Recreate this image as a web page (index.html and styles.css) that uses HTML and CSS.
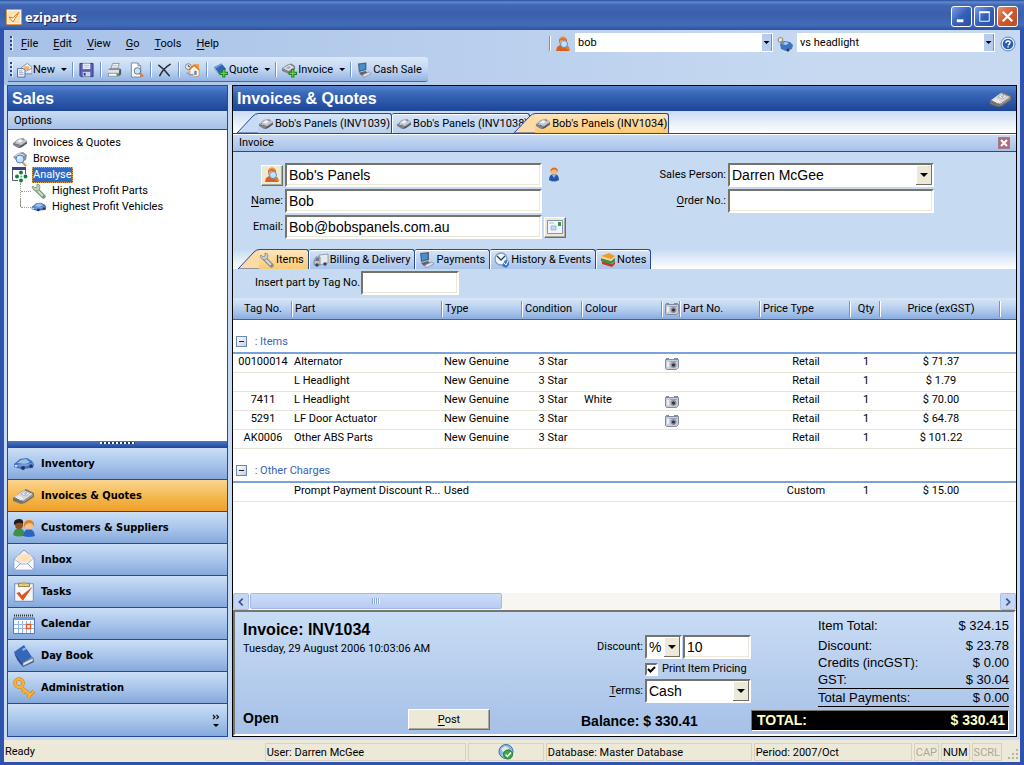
FILE: index.html
```html
<!DOCTYPE html>
<html lang="en">
  <head>
    <meta charset="utf-8">
    <title>eziparts</title>
    <meta name="viewport" content="width=device-width, initial-scale=1">
    <link rel="stylesheet" href="styles.css">
  </head>
  <body>
    <!-- icon sheet -->
    <svg class="sprites" aria-hidden="true">
      <symbol id="i-logo" viewBox="0 0 16 16">
        <rect x=".5" y=".5" width="15" height="15" rx="1" fill="#fff3dc" stroke="#e8963c"/>
        <path d="M2 2h12v12H2z" fill="#fbe3b8"/>
        <path d="M3 8l4 5 6-10-6 6z" fill="#fff" stroke="#e07b1c"/>
      </symbol>
      <symbol id="i-part" viewBox="0 0 16 16">
        <path d="M1 8l5-4 5-1 4 3v2l-5 4-4 1-5-3z" fill="#83858b"/>
        <path d="M1 8l6-4 4-.5 4 2.500-6 4z" fill="#c6c8ce"/>
        <path d="M5 6.500l3-2 3 1-3 2z" fill="#f3f4f7"/>
        <path d="M7 12l8-5v1.500L10 12l-3 1z" fill="#55575e"/>
        <path d="M2 8.500l3 2M5 9l2 1M10 4l2 1M4 7l-2 2" stroke="#707380" stroke-width=".9"/>
      </symbol>
      <symbol id="i-bigpart" viewBox="0 0 22 16">
        <path d="M0 10l9-7 4-2 8 4v4l-9 6-4 1-8-3z" fill="#77746f"/>
        <path d="M1 9l10-7 9 4-10 7z" fill="#d8d9da"/>
        <path d="M8 6l4-3 5 2-4 3z" fill="#fafafa" stroke="#9c9c9e" stroke-width=".7"/>
        <path d="M11 5.500l3-1M12 6.500l2-1" stroke="#7b86b5" stroke-width=".8"/>
        <path d="M3 9l5 3M5 8l5 3" stroke="#fff"/>
        <path d="M10 13l10-7v2l-9 6z" fill="#9a938a"/>
      </symbol>
      <symbol id="i-browse" viewBox="0 0 16 16">
        <path d="M1 6l5-4 5-1 4 3-1 5-7 3z" fill="#8c93a1"/>
        <path d="M2 5l5-3 6 2-5 3z" fill="#d5dae3"/>
        <path d="M10 11l4 4" stroke="#e39a52" stroke-width="2.4"/>
        <circle cx="8" cy="8" r="4" fill="#bfe3fa" stroke="#5b7fb5"/>
        <path d="M6 8q0-2 2-2" stroke="#fff" fill="none"/>
      </symbol>
      <symbol id="i-analyse" viewBox="0 0 16 16">
        <path d="M.5.5h13v13H.5z" fill="#fff" stroke="#55607e"/>
        <path d="M0 0h14v3H0z" fill="#2f4788"/>
        <path d="M6 7h8v8H6z" fill="#fff"/>
        <g fill="#0f7f33"><circle cx="9" cy="5.500" r="1.900"/><circle cx="5" cy="9.500" r="1.900"/><circle cx="13.500" cy="9.500" r="1.900"/><circle cx="9" cy="13.500" r="1.900"/></g>
        <circle cx="9.300" cy="9.500" r="1" fill="#57b074"/>
      </symbol>
      <symbol id="i-wrench" viewBox="0 0 16 16">
        <path d="M5.500 6.500l7 7" stroke="#7e8288" stroke-width="4.400" stroke-linecap="round"/>
        <path d="M5 6l7.500 7.500" stroke="#d6d8dc" stroke-width="2.400" stroke-linecap="round"/>
        <path d="M2 3l2 2 2-1V1q3 0 3 3t-3 4Q2 8 1 4z" fill="#c9ccd1" stroke="#85898f" stroke-width=".8"/>
        <circle cx="12.500" cy="13.500" r="1" fill="#6b6f76"/>
      </symbol>
      <symbol id="i-greenwrench" viewBox="0 0 16 16">
        <path d="M5.500 6.500l7 7" stroke="#6a9a62" stroke-width="4.400" stroke-linecap="round"/>
        <path d="M5 6l7.500 7.500" stroke="#cfd4cf" stroke-width="2.400" stroke-linecap="round"/>
        <path d="M2 3l2 2 2-1V1q3 0 3 3t-3 4Q2 8 1 4z" fill="#c9ccc9" stroke="#6a9a62" stroke-width=".8"/>
        <circle cx="12.500" cy="13.500" r="1" fill="#6b6f76"/>
      </symbol>
      <symbol id="i-car" viewBox="0 0 22 14">
        <path d="M1 7l6-5 7-1 5 3 2 3-1 4-12 1-7-2z" fill="#3d70bd"/>
        <path d="M4 6l4-3 5-1 4 3-5 2z" fill="#9cc0ea"/>
        <path d="M1 8l8-1 11-1v2l-11 2-8-1z" fill="#6c9bdb"/>
        <circle cx="10" cy="11" r="2" fill="#2b3550"/><circle cx="18" cy="9" r="1.800" fill="#2b3550"/>
        <circle cx="3" cy="9" r="1" fill="#e8f2fc"/>
      </symbol>
      <symbol id="i-new" viewBox="0 0 16 16">
        <path d="M5 5l6-4 5 4v7H5z" fill="#f2f4fa" stroke="#7286ad" stroke-width=".9"/>
        <path d="M7 4h6v4H7z" fill="#f6b26a"/><path d="M5 6l5 3 6-3v6H5z" fill="#e5eaf5" stroke="#7286ad" stroke-width=".8"/>
        <path d="M.5 6.500h6l2 2v7h-8z" fill="#fff" stroke="#4d67a2"/>
        <path d="M2 9h4M2 11h5M2 13h5" stroke="#7c96c9"/>
      </symbol>
      <symbol id="i-save" viewBox="0 0 16 16">
        <path d="M1 1h14v14H2l-1-1z" fill="#5a63b4" stroke="#2f3a86"/>
        <path d="M4 1h8v6H4z" fill="#eef3fb"/><path d="M4 10h8v5H4z" fill="#ccd4e6"/><path d="M5 11h2v3H5z" fill="#2c3f80"/>
        <path d="M5 3h6M5 5h6" stroke="#a9bce0"/>
      </symbol>
      <symbol id="i-print" viewBox="0 0 16 16">
        <path d="M6 1h7l-2 6H4z" fill="#fff" stroke="#6f7b93" stroke-width=".8"/>
        <path d="M6 3h5M5.500 5h5" stroke="#95a4c2" stroke-width=".8"/>
        <path d="M1 8l2-2h11l1 2v5l-2 2H1z" fill="#858d9b"/>
        <path d="M1 8h12v3H1z" fill="#dde1e8"/><path d="M2 12h10l-1 2H2z" fill="#fff"/><path d="M10 12h3v2h-3z" fill="#3a9b55"/>
        <path d="M13 8l2-1v5l-2 2z" fill="#4f5665"/>
      </symbol>
      <symbol id="i-preview" viewBox="0 0 16 16">
        <path d="M2.500.5h7l3 3v12h-10z" fill="#fff" stroke="#7383a6"/><path d="M9.500.5v3h3" fill="#dde6f5" stroke="#7383a6"/>
        <path d="M11 11l4 4" stroke="#de7d28" stroke-width="2.400"/>
        <circle cx="9" cy="9" r="3.500" fill="#c6e7fa" stroke="#5c7096"/>
      </symbol>
      <symbol id="i-cross" viewBox="0 0 16 16">
        <path d="M2 3q6 4 11 11M14 2Q7 6 3 14" stroke="#2d2d35" stroke-width="1.700" fill="none" stroke-linecap="round"/>
      </symbol>
      <symbol id="i-home" viewBox="0 0 18 16">
        <circle cx="4" cy="4" r="3.500" fill="#eef2f8" stroke="#6b7486"/><path d="M4 2v2h2" stroke="#333" fill="none"/>
        <path d="M12 1h5v6h-5z" fill="#f09c42"/>
        <path d="M6 8l5-5 6 5v7l-5 1-6-3z" fill="#fdf3df" stroke="#b37b3c" stroke-width=".7"/>
        <path d="M4 8l7-6 6 6" fill="none" stroke="#e57e1f" stroke-width="1.700"/>
        <path d="M11 9h3v5h-3z" fill="#6f89bb"/><path d="M2 11l4 3 4-1" stroke="#8f9bb3" fill="none" stroke-width="1.500"/>
      </symbol>
      <symbol id="i-quote" viewBox="0 0 16 16">
        <path d="M1 5l8-4 5 6-7 6z" fill="#2f66b3"/><path d="M1 5l8-4 1 1-8 5z" fill="#6aa0e0"/>
        <path d="M2 7l5 7 3-2" fill="none" stroke="#9db2d4" stroke-width="1.400"/>
        <path d="M11.500 7v9M7 11.500h9" stroke="#1e7d25" stroke-width="3.400"/><path d="M11.500 8v7M8 11.500h7" stroke="#6bd04f" stroke-width="1.400"/>
      </symbol>
      <symbol id="i-invoice" viewBox="0 0 16 16">
        <path d="M0 6l6-4 4-1 4 3v3l-7 5-7-3z" fill="#7e8188"/><path d="M1 6l7-4 5 3-6 4z" fill="#dddfe4"/><path d="M4 6l3-2 3 1-3 2z" fill="#a4a8b0"/>
        <path d="M11.500 7v9M7 11.500h9" stroke="#1e7d25" stroke-width="3.400"/><path d="M11.500 8v7M8 11.500h7" stroke="#6bd04f" stroke-width="1.400"/>
      </symbol>
      <symbol id="i-cash" viewBox="0 0 16 16">
        <path d="M1 1l9-1v8l-8 2z" fill="#59616f"/><path d="M2.500 2l6-.5v5.500l-5.500 1.500z" fill="#3f92d6"/>
        <path d="M2 11l7-2 2 2-6 3z" fill="#5b6373"/><path d="M6 13l7-3 2 2-8 4z" fill="#dfe2e8" stroke="#7c8390" stroke-width=".7"/>
      </symbol>
      <symbol id="i-find" viewBox="0 0 16 16">
        <path d="M4 5q0-4 4-4t4 4l-1 4 3 2v4H1l1-4 3-2z" fill="#d9611e"/><path d="M5 5q3-3 6 0v3H5z" fill="#f6bd83"/>
        <path d="M5 3q3-4 6 0" fill="none" stroke="#f29a3a" stroke-width="1.500"/>
        <path d="M11 11l4 3" stroke="#e48a22" stroke-width="2"/><circle cx="9" cy="8" r="3.500" fill="#bfe4fa" stroke="#6b8ebc"/>
      </symbol>
      <symbol id="i-findcar" viewBox="0 0 16 16">
        <path d="M3 8l4-3 6 1 3 3-1 4-6 2-5-2z" fill="#3e73bf"/><path d="M5 8l3-2 4 1-3 2z" fill="#acd0f4"/>
        <circle cx="3.500" cy="4" r="2.500" fill="#e6e3dc" stroke="#8a8678"/><path d="M4 5l2 3" stroke="#8a8d94" stroke-width="2"/>
        <circle cx="11" cy="14" r="1.500" fill="#303748"/>
      </symbol>
      <symbol id="i-help" viewBox="0 0 16 16">
        <circle cx="8" cy="8" r="7" fill="#e8f1fc" stroke="#5e88c4"/><circle cx="8" cy="8" r="5.300" fill="#2d5fb0"/>
        <path d="M6 7q0-2 2-2t2 1.500T8 9" fill="none" stroke="#fff" stroke-width="1.400"/><path d="M7.300 10.200h1.500v1.400H7.300z" fill="#fff"/>
      </symbol>
      <symbol id="i-person" viewBox="0 0 16 16">
        <path d="M3 13q0-6 5-6t5 6q-5 3-10 0z" fill="#2457a8"/><path d="M6 8l2 3 2-3z" fill="#8fb4ea"/>
        <circle cx="8" cy="4.500" r="3.300" fill="#f5b77c"/><path d="M4.500 5q-.5-4.500 4-4.500 4 .5 3 5-1-3-3.500-3T4.500 5z" fill="#df6f1c"/>
      </symbol>
      <symbol id="i-card" viewBox="0 0 16 14">
        <path d="M.5.5h15v13H.5z" fill="#f2f5fb" stroke="#8492b0"/><path d="M11 2h3v4h-3z" fill="#2f9c4d"/><path d="M2 3h5M4 6h5v4H4z" fill="#cbd5ea" stroke="#9aa9cb" stroke-width=".8"/>
      </symbol>
      <symbol id="i-truck" viewBox="0 0 16 16">
        <path d="M6 3l9-1v9l-9 2z" fill="#e6e9ee" stroke="#8a909b" stroke-width=".8"/><path d="M1 9l2-4h4v8H1z" fill="#bcc3cf" stroke="#747b88" stroke-width=".8"/>
        <path d="M2 9l1.500-3H6v3z" fill="#6d7890"/><circle cx="4" cy="13" r="1.700" fill="#3b4150"/><circle cx="12" cy="12" r="1.700" fill="#3b4150"/>
      </symbol>
      <symbol id="i-clock" viewBox="0 0 16 16">
        <circle cx="7" cy="7" r="6" fill="#f4f8fd" stroke="#7c9cc9" stroke-width="1.300"/><path d="M3 4l4 4 4-4" fill="none" stroke="#2b3c66" stroke-width="1.300"/>
        <path d="M8 14l3-6 4 1v4l-3 3z" fill="#3b78c6"/><path d="M10 11l2 2 2-4" stroke="#fff" fill="none"/>
      </symbol>
      <symbol id="i-books" viewBox="0 0 16 16">
        <path d="M2 9l10 3 3-3v3l-3 3-10-3z" fill="#c23a22"/><path d="M1 6l10 3 4-3v3l-4 3-10-3z" fill="#2f9650"/>
        <path d="M1 4l8-3 6 3-4 4-10-3z" fill="#f49a28"/><path d="M1 4v2l10 3 4-4V4l-4 3z" fill="#fbd58f"/>
      </symbol>
      <symbol id="i-camera" viewBox="0 0 14 13">
        <path d="M.5 2.500h13v8l-2 2h-10l-1-1z" fill="#c9cdd8" stroke="#868c9c"/><path d="M1 1h3v2H1zM9 1h4v2H9z" fill="#7f8cab"/>
        <path d="M5 4h7v1H5z" fill="#9aa1b3"/>
        <circle cx="8.500" cy="8" r="3" fill="#8d92a0"/><circle cx="8.500" cy="8" r="1.600" fill="#2e3139"/><path d="M2 5h2v5H2z" fill="#eceef2"/>
      </symbol>
      <symbol id="i-people" viewBox="0 0 22 18">
        <path d="M0 16q1-7 6-7t6 7q-6 3-12 0z" fill="#3d9142"/><circle cx="6" cy="6" r="4" fill="#8c4f22"/><path d="M1 6q-1-6 5-6 5 0 4 5Q6 2 1 6z" fill="#1d1b1b"/>
        <path d="M10 17q1-7 6-7t6 7q-6 2-12 0z" fill="#2a64c1"/><circle cx="16" cy="6.500" r="4" fill="#f6c08a"/><path d="M11 9q-1-8 5-8 6 0 5 7-1-4-5-4-4 1-5 5z" fill="#e4801f"/>
      </symbol>
      <symbol id="i-inbox" viewBox="0 0 22 22">
        <path d="M1 10L11 1l10 8v12H1z" fill="#eef1f9" stroke="#8c9bc4"/><path d="M4 7q7-4 14-1v7H4z" fill="#fde2bd"/>
        <path d="M1 10l7 5h6l7-6v12H1z" fill="#f7f9fd" stroke="#9aa8cb" stroke-width=".8"/><path d="M1 21l7-7M21 21l-7-7" stroke="#8c9bc4"/>
      </symbol>
      <symbol id="i-tasks" viewBox="0 0 20 20">
        <path d="M1.500 2.500h17v16h-17z" fill="#f5f8fe" stroke="#7a92c6"/><path d="M5 2h10v3H5z" fill="#e6cf93" stroke="#9e8646"/><circle cx="10" cy="2" r="1.500" fill="#c9ac60"/>
        <path d="M3 11l3-1 2 3L18 5 9 18z" fill="#e2541e"/>
      </symbol>
      <symbol id="i-calendar" viewBox="0 0 22 20">
        <path d="M.5 4h21v15.500H.5z" fill="#f8fbff" stroke="#5878b9"/><path d="M1 3h20v3H1z" fill="#6d9ae0"/><path d="M1 1.500h20" stroke="#333" stroke-dasharray="1 1" stroke-width="2"/>
        <path d="M5.500 7v12M9.500 7v12M13.500 7v12M17.500 7v12M1 10.500h20M1 14.500h20" stroke="#9ab4e2"/><path d="M13.500 10.500h4v4h-4z" fill="#fff" stroke="#e25c20" stroke-width="1.400"/>
      </symbol>
      <symbol id="i-book" viewBox="0 0 20 22">
        <path d="M0 7L10 0l8 12-9 6z" fill="#3567b7"/><path d="M0 7l9 11 10-6 1 5-11 5Q2 15 0 7z" fill="#2a4f94"/><path d="M9 18l10-5v3L9 21z" fill="#e8e8ea" stroke="#80848e" stroke-width=".7"/>
        <path d="M8 4l4-2 1 2-4 2z" fill="#8ab4ec"/>
      </symbol>
      <symbol id="i-key" viewBox="0 0 22 22">
        <path d="M7 9l10 9M12 13l-2 3M17 18l-2 3M17 18l4-4" stroke="#c47d14" stroke-width="3.600"/><circle cx="6" cy="6" r="4" fill="none" stroke="#c47d14" stroke-width="3.600"/>
        <path d="M7 9l10 9M12 13l-2 3M17 18l-2 3M17 18l4-4" stroke="#f9b03a" stroke-width="2.400"/><circle cx="6" cy="6" r="4" fill="none" stroke="#f9b03a" stroke-width="2.600"/>
      </symbol>
      <symbol id="i-globe" viewBox="0 0 16 16">
        <circle cx="8" cy="7.500" r="7" fill="#8db7e6" stroke="#3f6cae"/><path d="M3 5l4-3 4 2-2 3-4 1zM4 11l3-2 2 3-2 2z" fill="#dcebdc"/>
        <circle cx="10" cy="10.500" r="4.500" fill="#3faa43" stroke="#257a2b"/><path d="M7.500 10.500l2 2 3.500-4" stroke="#fff" stroke-width="1.500" fill="none"/>
      </symbol>
    </svg>

    <div class="window">
      <header class="titlebar">
        <svg class="ico"><use href="#i-logo"/></svg>
        <h1>eziparts</h1>
        <button class="win-btn" aria-label="Minimize"><svg viewBox="0 0 20 20"><path d="M5 13h7v3H5z" fill="#fff"/></svg></button>
        <button class="win-btn" aria-label="Maximize"><svg viewBox="0 0 20 20"><path d="M5 5.500h10V15H5z" fill="none" stroke="#fff"/><path d="M4.500 4.500h11v2h-11z" fill="#fff"/></svg></button>
        <button class="win-btn win-close" aria-label="Close"><svg viewBox="0 0 20 20"><path d="M5 5l10 10M15 5L5 15" stroke="#fff" stroke-width="2.400"/></svg></button>
      </header>

      <div class="bars">
        <div class="menubar">
          <span class="grip"></span>
          <nav class="menu">
            <button><u>F</u>ile</button>
            <button><u>E</u>dit</button>
            <button><u>V</u>iew</button>
            <button><u>G</u>o</button>
            <button><u>T</u>ools</button>
            <button><u>H</u>elp</button>
          </nav>
          <div class="search">
            <span class="sep"></span>
            <svg class="ico"><use href="#i-find"/></svg>
            <div class="combo"><input type="text" value="bob" aria-label="Find customer"><button aria-label="Recent customers"><i class="arrow"></i></button></div>
            <svg class="ico"><use href="#i-findcar"/></svg>
            <div class="combo"><input type="text" value="vs headlight" aria-label="Find part"><button aria-label="Recent parts"><i class="arrow"></i></button></div>
            <button class="help" aria-label="Help"><svg class="ico"><use href="#i-help"/></svg></button>
          </div>
        </div>
        <div class="toolbar">
          <span class="grip"></span>
          <button class="first"><svg class="ico"><use href="#i-new"/></svg>New<i class="arrow"></i></button>
          <span class="sep"></span>
          <button aria-label="Save"><svg class="ico"><use href="#i-save"/></svg></button>
          <span class="sep"></span>
          <button aria-label="Print"><svg class="ico"><use href="#i-print"/></svg></button>
          <button class="next" aria-label="Preview"><svg class="ico"><use href="#i-preview"/></svg></button>
          <span class="sep"></span>
          <button aria-label="Delete"><svg class="ico"><use href="#i-cross"/></svg></button>
          <span class="sep"></span>
          <button aria-label="Home"><svg class="ico"><use href="#i-home"/></svg></button>
          <span class="sep"></span>
          <button><svg class="ico"><use href="#i-quote"/></svg>Quote<i class="arrow"></i></button>
          <span class="sep"></span>
          <button><svg class="ico"><use href="#i-invoice"/></svg>Invoice<i class="arrow"></i></button>
          <span class="sep"></span>
          <button><svg class="ico"><use href="#i-cash"/></svg>Cash Sale</button>
        </div>
      </div>

      <div class="content">
        <aside class="side">
          <h2 class="band">Sales</h2>
          <h3 class="subband">Options</h3>
          <ul class="tree">
            <li><a href="#"><svg class="ico"><use href="#i-part"/></svg><span>Invoices &amp; Quotes</span></a></li>
            <li><a href="#"><svg class="ico"><use href="#i-browse"/></svg><span>Browse</span></a></li>
            <li><a href="#" class="selected"><svg class="ico"><use href="#i-analyse"/></svg><span>Analyse</span></a>
              <ul>
                <li><a href="#"><svg class="ico"><use href="#i-greenwrench"/></svg><span>Highest Profit Parts</span></a></li>
                <li><a href="#"><svg class="ico"><use href="#i-car"/></svg><span>Highest Profit Vehicles</span></a></li>
              </ul>
            </li>
          </ul>
          <div class="splitter"><i></i></div>
          <nav class="nav">
            <a href="#"><svg><use href="#i-car"/></svg>Inventory</a>
            <a href="#" class="current"><svg><use href="#i-bigpart"/></svg>Invoices &amp; Quotes</a>
            <a href="#"><svg><use href="#i-people"/></svg>Customers &amp; Suppliers</a>
            <a href="#"><svg><use href="#i-inbox"/></svg>Inbox</a>
            <a href="#"><svg><use href="#i-tasks"/></svg>Tasks</a>
            <a href="#"><svg><use href="#i-calendar"/></svg>Calendar</a>
            <a href="#"><svg><use href="#i-book"/></svg>Day Book</a>
            <a href="#"><svg><use href="#i-key"/></svg>Administration</a>
            <div class="more"><button aria-label="Configure buttons"><svg viewBox="0 0 8 14"><path d="M1 1l2 2-2 2M4.500 1l2 2-2 2" fill="none" stroke="#111" stroke-width="1.200"/><path d="M1 10h6l-3 3z"/></svg></button></div>
          </nav>
        </aside>

        <main class="main">
          <h2 class="band">Invoices &amp; Quotes <svg class="band-ico"><use href="#i-bigpart"/></svg></h2>
          <div class="tabs doc-tabs">
            <button class="tab slanted">
              <svg class="slant" viewBox="0 0 22 20"><path d="M0 20L16 3Q18 .5 22 .5V20z"/></svg>
              <span class="face"><svg class="ico"><use href="#i-part"/></svg>Bob's Panels (INV1039)</span>
            </button>
            <button class="tab">
              <span class="face"><svg class="ico"><use href="#i-part"/></svg>Bob's Panels (INV1038)</span>
            </button>
            <button class="tab slanted active">
              <svg class="slant" viewBox="0 0 22 20"><path d="M0 20L16 3Q18 .5 22 .5V20z"/></svg>
              <span class="face"><svg class="ico"><use href="#i-part"/></svg>Bob's Panels (INV1034)</span>
            </button>
          </div>
          <div class="subband doc-bar">Invoice <button aria-label="Close invoice"><svg viewBox="0 0 10 10"><path d="M2 2l6 6M8 2L2 8" stroke="#fff" stroke-width="2"/></svg></button></div>

          <form class="details">
            <div class="fields contact">
              <button type="button" class="bevel pick" aria-label="Find customer"><svg class="ico"><use href="#i-find"/></svg></button>
              <input type="text" value="Bob's Panels" aria-label="Customer">
              <svg class="ico"><use href="#i-person"/></svg>
              <label for="name"><u>N</u>ame:</label>
              <input type="text" id="name" value="Bob">
              <span></span>
              <label for="email">Email:</label>
              <input type="text" id="email" value="Bob@bobspanels.com.au">
              <button type="button" class="bevel pick" aria-label="Send email"><svg class="ico"><use href="#i-card"/></svg></button>
            </div>
            <div class="fields order">
              <label for="person">Sales Person:</label>
              <select id="person"><option>Darren McGee</option></select>
              <label for="order"><u>O</u>rder No.:</label>
              <input type="text" id="order">
            </div>
          </form>

          <div class="tabs page-tabs">
            <button class="tab slanted active">
              <svg class="slant" viewBox="0 0 22 20"><path d="M0 20L16 3Q18 .5 22 .5V20z"/></svg>
              <span class="face"><svg class="ico"><use href="#i-wrench"/></svg>Items</span>
            </button>
            <button class="tab"><span class="face"><svg class="ico"><use href="#i-truck"/></svg>Billing &amp; Delivery</span></button>
            <button class="tab"><span class="face"><svg class="ico"><use href="#i-cash"/></svg>Payments</span></button>
            <button class="tab"><span class="face"><svg class="ico"><use href="#i-clock"/></svg>History &amp; Events</span></button>
            <button class="tab"><span class="face"><svg class="ico"><use href="#i-books"/></svg>Notes</span></button>
          </div>

          <div class="insert">
            <label for="tag">Insert part by Tag No.</label>
            <input type="text" id="tag">
          </div>

          <div class="grid">
            <table>
              <colgroup>
                <col class="w60"><col class="w150"><col class="w80"><col class="w60"><col class="w80"><col class="w18"><col class="w80"><col class="w90"><col class="w30"><col class="w120"><col>
              </colgroup>
              <thead>
                <tr>
                  <th class="mid">Tag No.</th><th>Part</th><th>Type</th><th>Condition</th><th>Colour</th>
                  <th class="pic"><svg class="cam"><use href="#i-camera"/></svg></th>
                  <th>Part No.</th><th>Price Type</th><th class="mid">Qty</th><th class="mid">Price (exGST)</th><th></th>
                </tr>
              </thead>
              <tbody>
                <tr class="group"><td colspan="11"><button class="fold" aria-label="Collapse"></button> : Items</td></tr>
                <tr><td class="mid">00100014</td><td>Alternator</td><td>New Genuine</td><td class="mid">3 Star</td><td></td><td class="pic"><svg class="cam"><use href="#i-camera"/></svg></td><td></td><td class="mid">Retail</td><td class="mid">1</td><td class="mid">$ 71.37</td><td></td></tr>
                <tr><td></td><td>L Headlight</td><td>New Genuine</td><td class="mid">3 Star</td><td></td><td></td><td></td><td class="mid">Retail</td><td class="mid">1</td><td class="mid">$ 1.79</td><td></td></tr>
                <tr><td class="mid">7411</td><td>L Headlight</td><td>New Genuine</td><td class="mid">3 Star</td><td>White</td><td class="pic"><svg class="cam"><use href="#i-camera"/></svg></td><td></td><td class="mid">Retail</td><td class="mid">1</td><td class="mid">$ 70.00</td><td></td></tr>
                <tr><td class="mid">5291</td><td>LF Door Actuator</td><td>New Genuine</td><td class="mid">3 Star</td><td></td><td class="pic"><svg class="cam"><use href="#i-camera"/></svg></td><td></td><td class="mid">Retail</td><td class="mid">1</td><td class="mid">$ 64.78</td><td></td></tr>
                <tr><td class="mid">AK0006</td><td>Other ABS Parts</td><td>New Genuine</td><td class="mid">3 Star</td><td></td><td></td><td></td><td class="mid">Retail</td><td class="mid">1</td><td class="mid">$ 101.22</td><td></td></tr>
                <tr class="group"><td colspan="11"><button class="fold" aria-label="Collapse"></button> : Other Charges</td></tr>
                <tr><td></td><td>Prompt Payment Discount R...</td><td>Used</td><td></td><td></td><td></td><td></td><td class="mid">Custom</td><td class="mid">1</td><td class="mid">$ 15.00</td><td></td></tr>
              </tbody>
            </table>
          </div>
          <div class="scrollbar">
            <button aria-label="Scroll left"><svg viewBox="0 0 14 14"><path d="M9 3L5 7l4 4" fill="none" stroke="#3f5680" stroke-width="2"/></svg></button>
            <div class="track"><div class="thumb"><i></i></div></div>
            <button aria-label="Scroll right"><svg viewBox="0 0 14 14"><path d="M5 3l4 4-4 4" fill="none" stroke="#3f5680" stroke-width="2"/></svg></button>
          </div>

          <footer class="summary">
            <div class="info">
              <h3>Invoice: INV1034</h3>
              <p>Tuesday, 29 August 2006 10:03:06 AM</p>
              <div class="state"><strong>Open</strong><button class="bevel post"><span><u>P</u>ost</span></button></div>
            </div>
            <div class="terms">
              <label for="discount">Discount:</label>
              <div class="pair">
                <select class="unit" aria-label="Discount unit"><option>%</option></select>
                <input type="text" id="discount" value="10">
              </div>
              <label class="check"><input type="checkbox" checked> Print Item Pricing</label>
              <label for="terms"><u>T</u>erms:</label>
              <select id="terms"><option>Cash</option></select>
              <p class="balance">Balance: $ 330.41</p>
            </div>
            <div class="totals">
              <dl>
                <div class="lead"><dt>Item Total:</dt><dd>$ 324.15</dd></div>
                <div><dt>Discount:</dt><dd>$ 23.78</dd></div>
                <div><dt>Credits (incGST):</dt><dd>$ 0.00</dd></div>
                <div><dt>GST:</dt><dd>$ 30.04</dd></div>
                <div class="paid"><dt>Total Payments:</dt><dd>$ 0.00</dd></div>
              </dl>
              <p class="total"><span>TOTAL:</span><span>$ 330.41</span></p>
            </div>
          </footer>
        </main>
      </div>

      <div class="status">
        <span class="ready">Ready</span>
        <span class="cell user">User: Darren McGee</span>
        <span class="cell net"><svg class="ico"><use href="#i-globe"/></svg></span>
        <span class="cell db">Database: Master Database</span>
        <span class="cell period">Period: 2007/Oct</span>
        <span class="cell off">CAP</span>
        <span class="cell">NUM</span>
        <span class="cell off">SCRL</span>
        <svg class="resize" viewBox="0 0 12 12"><path d="M9 1h2v2H9zM5 5h2v2H5zM9 5h2v2H9zM1 9h2v2H1zM5 9h2v2H5zM9 9h2v2H9z" fill="#b8b4a2"/></svg>
      </div>
    </div>
  </body>
</html>
```
FILE: styles.css
```css
* {
  box-sizing: border-box;
}

html, body {
  height: 100%;
  margin: 0;
}

body {
  font: 11px/16px Roboto, "Liberation Sans", sans-serif;
  color: #000;
}

h1, h2, h3, p, ul, dl, dd {
  margin: 0;
  padding: 0;
}

ul {
  list-style: none;
}

button, input, select {
  font: inherit;
  color: inherit;
  margin: 0;
  padding: 0;
  border: 0;
  border-radius: 0;
  background: none;
}

a {
  color: inherit;
  text-decoration: none;
}

svg {
  display: block;
  flex: none;
}

u {
  text-underline-offset: 2px;
}

.sprites {
  position: absolute;
  width: 0;
  height: 0;
}

.ico {
  width: 16px;
  height: 16px;
}

.window {
  min-height: 100%;
  display: flex;
  flex-direction: column;
  background: #c6daf3;
  border: 4px solid #2f52ad;
  border-width: 0 4px 3px;
}

/* title bar */
.titlebar {
  display: flex;
  align-items: center;
  height: 30px;
  margin: 0 -4px;
  padding: 3px 6px 0;
  background: linear-gradient(#2b4c9c, #5b8ad0 2px, #4167b4 5px, #3b5fad 14px, #426bb8 25px, #2f50a0);
}

.titlebar h1 {
  flex: 1;
  margin-left: 3px;
  font: bold 13px/18px "Open Sans", "Noto Sans", sans-serif;
  color: #fff;
  text-shadow: 1px 1px 0 #14295f;
}

.win-btn {
  width: 21px;
  height: 21px;
  margin-left: 2px;
  border: 1px solid #fff;
  border-radius: 3px;
  background: linear-gradient(135deg, #7b9fdf, #3560ba 50%, #2a51a6);
}

.win-close {
  background: linear-gradient(135deg, #e8906a, #d2582c 50%, #c24a1e);
}

/* menu and toolbar */
.bars {
  padding: 0 4px 3px;
  background: linear-gradient(90deg, #a7c1e7, #c6d9f1 80%);
}

.menubar {
  display: flex;
  align-items: center;
  height: 27px;
}

.grip {
  width: 3px;
  height: 15px;
  margin-left: 2px;
  background: repeating-linear-gradient(#2c4584 0 2px, transparent 2px 4px);
  border-right: 1px solid #e4eefb;
}

.menu {
  flex: 1;
  display: flex;
  gap: 15px;
  padding-left: 8px;
}

.search {
  display: flex;
  align-items: center;
  gap: 4px;
}

.help {
  margin-left: 1px;
}

.sep {
  width: 2px;
  height: 15px;
  background: #6f94d2;
  border-right: 1px solid #fff;
}

.combo {
  display: flex;
  width: 198px;
  height: 19px;
  padding: 1px;
  margin-bottom: 2px;
  background: #fff;
}

.combo input {
  flex: 1;
  min-width: 0;
  padding-left: 2px;
}

.combo button {
  width: 10px;
  background: #b6cdee;
  border-right: 1px solid #6f94d2;
}

.arrow {
  display: inline-block;
  width: 6px;
  height: 3px;
  background: #000;
  clip-path: polygon(0 0, 100% 0, 50% 100%);
}

.combo .arrow {
  display: block;
  margin: 0 auto;
}

.toolbar {
  display: inline-flex;
  align-items: center;
  height: 25px;
  padding: 1px 1px 0 0;
  background: linear-gradient(#dbe8f8, #c2d7f2 50%, #94b4e1);
  border-bottom: 1px solid #3f68ad;
  border-radius: 0 3px 3px 0;
}

.toolbar button {
  display: flex;
  align-items: center;
  padding: 0 5px;
}

.toolbar .first {
  padding-left: 4px;
}

.toolbar .next {
  padding-left: 1px;
}

.toolbar .ico {
  width: 15px;
  margin-right: 1px;
}

.toolbar .arrow {
  margin-left: 6px;
}

/* shared headings */
.content {
  flex: 1;
  display: flex;
  gap: 4px;
  padding: 0 3px 3px;
}

.band {
  display: flex;
  align-items: center;
  justify-content: space-between;
  height: 25px;
  padding: 0 4px;
  font: bold 16px/24px "Liberation Sans", Arial, sans-serif;
  color: #fff;
  background: linear-gradient(#5485cf, #3a67b8 30%, #1e4597);
}

.band-ico {
  width: 22px;
  height: 16px;
}

.subband {
  height: 19px;
  padding: 1px 6px 0;
  font-size: 11px;
  font-weight: normal;
  line-height: 18px;
  background: linear-gradient(#c9dbf4, #a6c1e8);
  border-bottom: 1px solid #2a459c;
}

/* left pane */
.side {
  width: 221px;
  flex: none;
  display: flex;
  flex-direction: column;
  border: 1px solid #2a459c;
  background: #fff;
}

.tree {
  flex: 1;
  padding: 5px 4px 0;
}

.tree a {
  display: flex;
  align-items: center;
  gap: 4px;
  height: 16px;
}

.tree a span {
  padding: 0 1px;
}

.tree .selected span {
  color: #fff;
  background: #316ac5;
  outline: 1px dotted #e0a050;
  outline-offset: -1px;
}

.tree ul {
  margin-left: 8px;
}

.tree ul li {
  display: flex;
  align-items: center;
  border-left: 1px dotted #9a9a8c;
}

.tree ul li:last-child {
  border-image: linear-gradient(#9a9a8c 50%, transparent 50%) 1;
}

.tree ul li::before {
  content: "";
  width: 10px;
  border-top: 1px dotted #9a9a8c;
}

.splitter {
  height: 7px;
  padding-top: 1px;
  background: linear-gradient(#4b79c6, #1f459a);
}

.splitter i {
  display: block;
  width: 35px;
  height: 2px;
  margin: 0 auto;
  background: repeating-linear-gradient(90deg, #fff 0 2px, #1b3670 2px 4px);
}

.nav a, .more {
  display: flex;
  align-items: center;
  gap: 6px;
  height: 32px;
  padding: 1px 5px 0;
  font: bold 11px/16px "DejaVu Sans Condensed", "DejaVu Sans", sans-serif;
  background: linear-gradient(#cbdef5, #a9c6ec 50%, #86a9dc);
  border-bottom: 1px solid #2a459c;
}

.nav a svg {
  width: 22px;
  height: 22px;
}

.nav .current {
  background: linear-gradient(#fbd58e, #f3b548 60%, #efa02d);
}

.more {
  justify-content: flex-end;
  padding-right: 7px;
  border-bottom: 0;
}

.more svg {
  width: 8px;
  height: 14px;
}

/* right pane */
.main {
  flex: 1;
  min-width: 0;
  display: flex;
  flex-direction: column;
  border: 1px solid #000;
  background: #c6daf2;
}

.tabs {
  display: flex;
  align-items: flex-end;
}

.doc-tabs {
  height: 23px;
  padding-left: 4px;
  background: linear-gradient(#c9dcf4, #fff);
  border-bottom: 1px solid #2a459c;
}

.page-tabs {
  height: 20px;
  padding-left: 5px;
  background: linear-gradient(#c6daf2, #fff);
}

.tab {
  display: flex;
  height: 20px;
}

.face {
  display: flex;
  align-items: center;
  height: 20px;
  padding: 0 4px 0 4px;
  gap: 1px;
  border: 1px solid #2a459c;
  border-width: 1px 1px 0 0;
  border-radius: 2px 3px 0 0;
  box-shadow: inset 1px 1px 0 #fff;
  background: linear-gradient(#d5e4f7, #a9c4ea);
}

.doc-tabs .face {
  padding-right: 1px;
  background: linear-gradient(#d5e4f7, #b9d0f0);
}

.slant {
  width: 22px;
  height: 20px;
  fill: #c9dbf4;
  stroke: #2a459c;
}

.slant + .face {
  padding-left: 0;
  border-radius: 0 3px 0 0;
  box-shadow: none;
  margin-left: -1px;
}

.active .slant {
  fill: #fbdba6;
}

.active .slant + .face {
  background: linear-gradient(#fde5bf, #fbca72);
}

.tab + .slanted {
  margin-left: -16px;
}

.doc-bar {
  display: flex;
  align-items: center;
  justify-content: space-between;
  height: 18px;
  padding-top: 0;
  border-top: 1px solid #fff;
}

.doc-bar button {
  width: 12px;
  height: 12px;
  background: #b06a7c;
  border: 1px solid #a07c94;
}

.details {
  display: flex;
  justify-content: space-between;
  padding: 11px 82px 10px 17px;
}

.fields {
  display: grid;
  grid-auto-rows: 24px;
  gap: 2px;
  align-items: center;
}

.contact {
  grid-template-columns: 33px 257px 24px;
}

.order {
  grid-template-columns: auto 206px;
  align-self: start;
}

.fields label, .terms label {
  text-align: right;
}

.fields input, .fields select, .insert input, .terms select, .pair input {
  width: 100%;
  height: 24px;
  padding: 0 2px;
  font: 14px/18px "Liberation Sans", Arial, sans-serif;
  background: #fff;
  border: 2px solid;
  border-color: #76736a #fff #fff #76736a;
  box-shadow: inset -1px -1px 0 #ece9d8;
}

.fields select, .terms select {
  appearance: none;
  background: #fff url('data:image/svg+xml,<svg xmlns="http://www.w3.org/2000/svg" width="16" height="20"><path d="M0 0h16v20H0z" fill="%23716f64"/><path d="M0 0h15v19H0z" fill="%23fff"/><path d="M1 1h14v18H1z" fill="%23ece9d8"/><path d="M4 8h8l-4 4z"/></svg>') right center no-repeat;
  box-shadow: none;
}

.bevel {
  display: flex;
  align-items: center;
  justify-content: center;
  background: #ece9d8;
  border: 1px solid;
  border-color: #fff #716f64 #716f64 #fff;
  box-shadow: inset -1px -1px 0 #aca899;
}

.pick {
  width: 22px;
  height: 21px;
}

.contact .pick:first-child {
  justify-self: end;
}

.contact > .ico {
  margin-left: 2px;
}

.insert {
  display: flex;
  align-items: center;
  gap: 1px;
  height: 29px;
  padding: 0 0 1px 22px;
}

.insert input {
  width: 98px;
}

/* item list */
.grid {
  flex: 1;
  background: #fff;
}

table {
  width: 100%;
  table-layout: fixed;
  border-collapse: separate;
  border-spacing: 0;
}

.w18 { width: 18px; }
.w30 { width: 30px; }
.w60 { width: 60px; }
.w80 { width: 80px; }
.w90 { width: 90px; }
.w120 { width: 120px; }
.w150 { width: 150px; }

th {
  height: 22px;
  padding: 1px 2px 0;
  font-weight: normal;
  text-align: left;
  white-space: nowrap;
  border-bottom: 1px solid #3c64a8;
  background: linear-gradient(#6f94d2, #6f94d2) right 1px center / 1px 16px no-repeat,
    linear-gradient(#fff, #fff) right center / 1px 16px no-repeat,
    linear-gradient(#d9e7f8, #b6cfef 50%, #8aade0);
}

th:last-child {
  background: linear-gradient(#d9e7f8, #b6cfef 50%, #8aade0);
}

td {
  height: 19px;
  padding: 0 1px 2px;
  line-height: 16px;
  white-space: nowrap;
  border-bottom: 1px solid #e6e4d8;
}

.mid {
  text-align: center;
}

.pic {
  padding: 0;
}

.cam {
  width: 14px;
  height: 13px;
  margin: 0 auto;
}

.group td {
  height: 34px;
  padding: 11px 3px 0;
  color: #3a62b4;
  border-bottom: 2px solid #7ba2d8;
}

.fold {
  width: 11px;
  height: 11px;
  margin-right: 5px;
  vertical-align: middle;
  border: 1px solid #6c86b5;
  background: linear-gradient(#222, #222) center / 5px 1px no-repeat, linear-gradient(135deg, #fff, #c5cfe2);
}

.scrollbar {
  display: flex;
  height: 17px;
  background: #f7f6f1;
}

.scrollbar button {
  width: 16px;
  padding: 0 1px;
  border: 1px solid #a9bfea;
  border-radius: 2px;
  background: #c5d5f6;
}

.track {
  flex: 1;
}

.thumb {
  width: 33.5%;
  height: 16px;
  margin-left: 1px;
  padding: 4px 0;
  border: 1px solid #a3b9e6;
  border-radius: 2px;
  background: linear-gradient(#cddcf9, #b8cbf0);
}

.thumb i {
  display: block;
  width: 8px;
  height: 6px;
  margin: 0 auto;
  background: repeating-linear-gradient(90deg, #8ba6dc 0 1px, #eef4fe 1px 2px);
}

/* invoice summary */
.summary {
  display: grid;
  grid-template-columns: 1fr 170px 258px;
  height: 126px;
  padding: 4px 5px 3px 8px;
  border: 2px solid;
  border-color: #77756c #fff #fff #77756c;
  background: linear-gradient(#c8dcf4, #a6c0e7);
}

.info {
  display: flex;
  flex-direction: column;
}

.info h3 {
  margin: 4px 0 1px;
  font: bold 16px/20px "Liberation Sans", Arial, sans-serif;
}

.state {
  flex: 1;
  display: flex;
  align-items: flex-end;
  padding-bottom: 1px;
}

.state strong, .balance {
  font: bold 14px/20px "Liberation Sans", Arial, sans-serif;
}

.state strong {
  width: 165px;
  padding-bottom: 2px;
}

.post {
  width: 82px;
  height: 21px;
}

.terms {
  display: grid;
  grid-template-columns: 62px 106px;
  grid-template-rows: 24px 20px 24px 1fr;
  align-items: center;
  column-gap: 2px;
  padding-top: 19px;
}

.pair {
  display: grid;
  grid-template-columns: 37px 1fr;
  gap: 1px;
}

.terms .check {
  grid-column: 2;
  display: flex;
  align-items: center;
  gap: 4px;
}

.check input {
  appearance: none;
  width: 13px;
  height: 13px;
  border: 2px solid;
  border-color: #76736a #fff #fff #76736a;
  background: #fff;
}

.check input:checked {
  background: #fff url('data:image/svg+xml,<svg xmlns="http://www.w3.org/2000/svg" width="9" height="9"><path d="M1 4l2.500 2.500L8 2" fill="none" stroke="%23000" stroke-width="2"/></svg>') center no-repeat;
}

.terms .balance {
  grid-column: 1 / 3;
  align-self: end;
}

.totals {
  padding-top: 1px;
  font: 13px/17px "Liberation Sans", Arial, sans-serif;
}

.totals dl {
  width: 191px;
  margin-left: auto;
}

.totals dl div, .total {
  display: flex;
  justify-content: space-between;
}

.totals .lead {
  margin-bottom: 3px;
}

.totals .paid {
  border: 1px solid #000;
  border-width: 1px 0;
}

.total {
  margin-top: 3px;
  padding: 0 3px 0 5px;
  font-size: 14px;
  font-weight: bold;
  line-height: 19px;
  color: #ffffc8;
  background: #000;
  border: 1px solid;
  border-color: #76736a #fff #fff #76736a;
}

/* status bar */
.status {
  display: flex;
  align-items: center;
  gap: 2px;
  height: 22px;
  padding: 2px 0 0 1px;
  background: #ece9d8;
}

.status .ready {
  flex: 1;
}

.cell {
  height: 18px;
  padding: 0 1px;
  line-height: 17px;
  border: 1px solid #d5d2c4;
}

.user { width: 201px; }
.net { width: 76px; }
.db { width: 206px; }
.period { width: 158px; }

.net .ico {
  margin: 0 auto;
}

.off {
  color: #aca899;
}

.resize {
  width: 12px;
  height: 12px;
  margin: 4px 1px 0 3px;
}
```
